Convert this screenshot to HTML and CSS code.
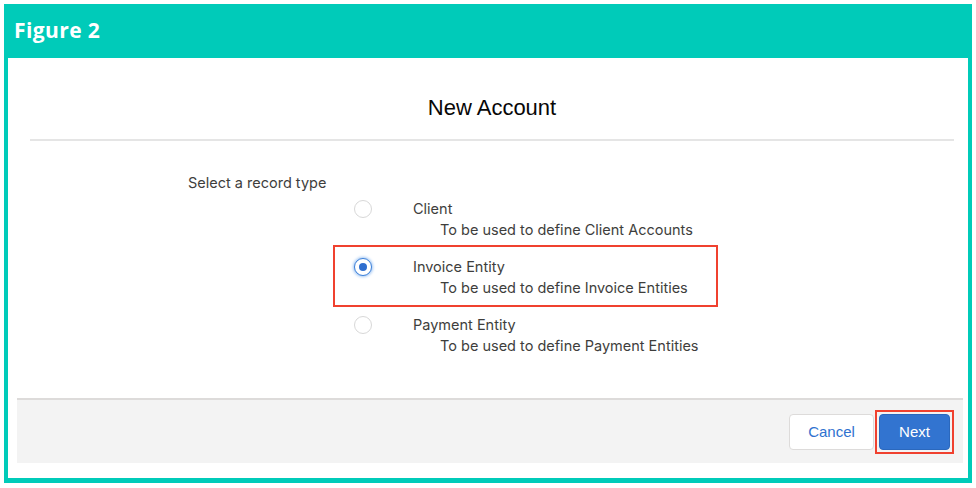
FILE: index.html
```html
<!DOCTYPE html>
<html lang="en">
<head>
    <meta charset="UTF-8">
    <meta name="viewport" content="width=device-width, initial-scale=1.0">
    <title>Figure 2 - New Account</title>
    <link rel="stylesheet" href="styles.css">
</head>
<body>
    <div class="frame">
        <div class="frame-title">Figure 2</div>
        <div class="modal">
            <div class="modal-header">
                <h2>New Account</h2>
            </div>
            <div class="modal-content">
                <div class="select-label">Select a record type</div>
                <div class="record-list">
                    <label class="record">
                        <span class="radio"></span>
                        <span class="record-text">
                            <span class="record-name">Client</span>
                            <span class="record-desc">To be used to define Client Accounts</span>
                        </span>
                    </label>
                    <label class="record selected">
                        <span class="radio checked"></span>
                        <span class="record-text">
                            <span class="record-name">Invoice Entity</span>
                            <span class="record-desc">To be used to define Invoice Entities</span>
                        </span>
                    </label>
                    <label class="record">
                        <span class="radio"></span>
                        <span class="record-text">
                            <span class="record-name">Payment Entity</span>
                            <span class="record-desc">To be used to define Payment Entities</span>
                        </span>
                    </label>
                </div>
            </div>
            <div class="modal-footer">
                <button class="btn btn-neutral">Cancel</button>
                <span class="highlight">
                    <button class="btn btn-brand">Next</button>
                </span>
            </div>
        </div>
    </div>
</body>
</html>
```

FILE: styles.css
```css
* {
    margin: 0;
    padding: 0;
    box-sizing: border-box;
}
body {
    font-family: Inter, 'Liberation Sans', Arial, sans-serif;
    background: #ffffff;
    color: #3e3e3c;
}
.frame {
    margin: 4px;
    width: 968px;
    height: 479px;
    background: #00cbb9;
    padding: 0 4px 5px 4px;
}
.frame-title {
    height: 54px;
    padding: 13px 0 0 6px;
    font-family: 'Open Sans', sans-serif;
    font-weight: 700;
    font-size: 21px;
    line-height: 26px;
    letter-spacing: 0.4px;
    color: #ffffff;
}
.modal {
    background: #ffffff;
    height: 420px;
    display: flex;
    flex-direction: column;
}
.modal-header {
    margin: 0 14px 0 22px;
    height: 83px;
    border-bottom: 2px solid #e5e5e5;
    padding-top: 37px;
}
.modal-header h2 {
    font-family: 'Liberation Sans', Arial, sans-serif;
    font-weight: 400;
    font-size: 22px;
    line-height: 26px;
    text-align: center;
    color: #080707;
}
.modal-content {
    padding: 36px 0 0 180px;
    height: 257px;
}
.select-label {
    font-size: 14.5px;
    line-height: 12px;
    height: 12px;
}
.record-list {
    margin-left: 147px;
    width: 381px;
}
.record {
    display: flex;
    height: 58px;
    padding: 11px 0 0 19px;
    cursor: pointer;
}
.record.selected {
    outline: 2px solid #f0412f;
}
.radio {
    width: 18px;
    height: 18px;
    border: 1px solid #d8d8d8;
    border-radius: 50%;
    background: #ffffff;
    position: relative;
    flex-shrink: 0;
}
.radio.checked {
    border-color: #3b7fd9;
    box-shadow: 0 0 3px 1px #9ec4f2;
}
.radio.checked::after {
    content: '';
    position: absolute;
    top: 4px;
    left: 4px;
    width: 8px;
    height: 8px;
    border-radius: 50%;
    background: #2f6fcf;
}
.record-text {
    display: flex;
    flex-direction: column;
    margin: -2px 0 0 41px;
    font-size: 14.5px;
    line-height: 21px;
}
.record-desc {
    padding-left: 27px;
}
.modal-footer {
    margin: 0 5px 15px 9px;
    height: 65px;
    background: #f3f3f3;
    border-top: 2px solid #dddbda;
    display: flex;
    justify-content: flex-end;
    align-items: center;
    gap: 1px;
    padding: 0 9px 0 0;
}
.btn {
    height: 36px;
    border-radius: 4px;
    font-family: 'Liberation Sans', Arial, sans-serif;
    font-size: 15px;
    cursor: pointer;
}
.btn-neutral {
    width: 85px;
    background: #ffffff;
    border: 1px solid #dddbda;
    color: #2f72cf;
}
.btn-brand {
    display: block;
    width: 71px;
    background: #3274d0;
    border: 1px solid #2b68bd;
    color: #ffffff;
}
.highlight {
    display: block;
    border: 2px solid #f0412f;
    padding: 2px;
}
```
